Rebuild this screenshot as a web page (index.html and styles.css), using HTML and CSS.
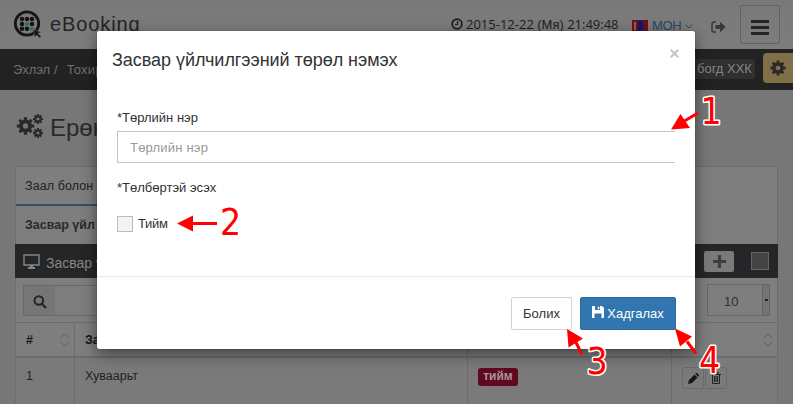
FILE: index.html
```html
<!DOCTYPE html>
<html lang="mn">
<head>
<meta charset="utf-8">
<title>eBooking</title>
<link rel="stylesheet" href="styles.css">
</head>
<body>
<header class="topbar">
  <svg class="logo" width="28" height="28" viewBox="0 0 28 28">
    <circle cx="14" cy="13.500" r="11.700" fill="none" stroke="#151515" stroke-width="2.800"/>
    <g fill="#151515"><circle cx="9" cy="9" r="2.300"/><circle cx="14" cy="9" r="2.300"/><circle cx="19" cy="9" r="2.300"/><circle cx="9" cy="14" r="2.300"/><circle cx="19" cy="14" r="2.300"/><circle cx="9" cy="18.700" r="2.300"/><circle cx="14" cy="18.700" r="2.300"/></g>
    <circle cx="14" cy="14" r="2" fill="#28706f"/><circle cx="18.700" cy="18.700" r="2" fill="#28706f"/>
    <path d="M20 19.500l8 2.500-3 1.500 3 3-1.500 1.500-3-3-1.500 2.500z" fill="#151515" stroke="#7a7a7a" stroke-width=".5"/>
  </svg>
  <span class="brand">eBooking</span>
  <svg class="clock" width="12" height="12" viewBox="0 0 12 12" fill="none" stroke="#1c1c1c"><circle cx="6" cy="6" r="4.900" stroke-width="1.700"/><path d="M6.500 3v3.500H4" stroke-width="1.200"/></svg>
  <span class="date">2015-12-22 <span class="day">(Мя)</span> 21:49:48</span>
  <svg class="flag" width="16" height="11" viewBox="0 0 16 11"><path fill="#701018" d="M0 0h16v11H0z"/><path fill="#161670" d="M6 1h5v10H6z"/><path d="M2 2h2v8H2z" fill="#8d6838"/></svg>
  <span class="lang">МОН</span>
  <svg class="chev" width="8" height="5" viewBox="0 0 8 5"><path d="M.5.5L4 4 7.500.5" fill="none" stroke="#234663"/></svg>
  <svg class="exit" width="15" height="12" viewBox="0 0 15 12"><path d="M5 1H3Q1 1 1 3v6q0 2 2 2h2" fill="none" stroke="#393939" stroke-width="1.500"/><path d="M4.500 4h4.500V.8L14.700 6 9 11.200V8H4.500z" fill="#393939"/></svg>
  <div class="burger"><i></i><i></i><i></i></div>
</header>
<nav class="crumbs">
  <span class="c1">Эхлэл</span><span class="sl">/</span><span class="c2">Тохир</span>
  <span class="org">богд ХХК</span>
  <span class="gearbox"><svg width="16" height="16" viewBox="-8 -8 16 16"><use href="#gear"/></svg></span>
</nav>
<svg class="defs" width="0" height="0"><defs><g id="gear"><circle r="4" fill="none" stroke="#292929" stroke-width="3.300"/><path d="M0-7.600V-4M0 4v3.600M-7.600 0H-4M4 0h3.600M-5.300-5.300l2.300 2.300M3 3l2.300 2.300M-5.300 5.300L-3 3M3-3l2.300-2.300" stroke="#292929" stroke-width="2.800"/></g></defs></svg>
<main class="page">
  <div class="heading">
    <svg width="28" height="24" viewBox="0 0 28 24"><use href="#gear" transform="translate(9.500 12) scale(1.150)"/><use href="#gear" transform="translate(22 5) scale(.66)"/><use href="#gear" transform="translate(22 19) scale(.66)"/></svg>
    <h1>Ерөн</h1>
  </div>
  <section class="panel">
    <div class="tab">Заал болон с</div>
    <div class="tab second">Засвар үйл</div>
    <div class="bar">
      <svg width="17" height="15" viewBox="0 0 17 15"><path d="M1 1h15v10H1z" fill="none" stroke="#858585" stroke-width="1.400"/><path d="M7 11h3v2h2v2H5v-2h2z" fill="#858585"/></svg>
      <span>Засвар ү</span>
      <b class="plus"><svg width="13" height="13" viewBox="0 0 13 13"><path d="M6.500 0v13M0 6.500h13" stroke="#393f44" stroke-width="3.200"/></svg></b>
      <b class="square"></b>
    </div>
    <div class="search">
      <div class="lens"><svg width="14" height="14" viewBox="0 0 14 14" fill="none" stroke="#242424"><circle cx="5.800" cy="5.500" r="4.300" stroke-width="2"/><path d="M9 9l4 4" stroke-width="2.200"/></svg></div>
      <div class="field"></div>
      <div class="count"><span>10</span><i></i></div>
    </div>
    <div class="row head">
      <div><span>#</span><svg class="sort" width="10" height="14" viewBox="0 0 10 14"><path d="M.5 5L5 .7 9.500 5M.5 8.500L5 13l4.500-4.500" fill="none" stroke="#5c5c5c"/></svg></div>
      <div>За</div><div></div>
      <div><svg class="sort" width="10" height="14" viewBox="0 0 10 14"><path d="M.5 5L5 .7 9.500 5M.5 8.500L5 13l4.500-4.500" fill="none" stroke="#5c5c5c"/></svg></div>
    </div>
    <div class="row data">
      <div>1</div><div>Хуваарьт</div><div><span class="tag">тийм</span></div>
      <div class="acts">
        <b><svg width="11" height="11" viewBox="0 0 11 11"><path d="M0 11l1-4 5.500-5.500 3 3L4 10zM7.200.8L8 0h1l2 2v1l-.8.800z" fill="#171717"/></svg></b>
        <b><svg width="10" height="12" viewBox="0 0 10 12" fill="none" stroke="#222"><path d="M0 2.500h10M3 2V.500h4V2M1.500 3v8.500h7V3M3.500 4v6M5 4v6M6.500 4v6"/></svg></b>
      </div>
    </div>
  </section>
</main>
<div class="modal">
  <div class="mhead"><h2>Засвар үйлчилгээний төрөл нэмэх</h2>
    <svg width="9" height="9" viewBox="0 0 9 9"><path d="M.8.8l7.400 7.400M8.200.8L.8 8.200" stroke="#c4c4c4" stroke-width="2"/></svg></div>
  <div class="mbody">
    <label class="l1">*Төрлийн нэр</label>
    <div class="input">Төрлийн нэр</div>
    <label class="l2">*Төлбөртэй эсэх</label>
    <div class="check"><i></i><span>Тийм</span></div>
  </div>
  <div class="mfoot">
    <div class="btn"><span class="bt">Болих</span></div>
    <div class="btn primary"><svg width="12" height="12" viewBox="0 0 12 12"><path fill="#fff" fill-rule="evenodd" d="M0 0h10l2 2v10H9.500V7.500h-7V12H0zM3 0v4h5V0zM5.700.7h1.600v2.600H5.700z"/></svg><span class="st">Хадгалах</span></div>
  </div>
</div>
<svg class="notes" width="793" height="404" viewBox="0 0 793 404">
  <g stroke="#f00" stroke-width="3"><path d="M698 113l-17 10M217 223.500h-30M582 354.500l-6-12M696 353.500l-9-12"/></g>
  <g fill="#f00"><path d="M671 129.500l9.500-15.500 9.500 14zM177 223.500l16-8v16zM567 329l16 9.500-14.500 9zM675 328.500l17 8-12 10z"/></g>
  <g class="num"><text x="700.500" y="124">1</text><text x="220" y="235">2</text><text x="586.500" y="373.500">3</text><text x="699" y="373">4</text></g>
</svg>
</body>
</html>
```
FILE: styles.css
```css
* { box-sizing: border-box; }
body { margin: 0; width: 793px; height: 404px; overflow: hidden; position: relative; background: #777; font: 13px "Liberation Sans", sans-serif; color: #222; }
svg { display: block; flex: none; }
span, label, h1, h2 { white-space: nowrap; }
.defs { position: absolute; }
.topbar { height: 49px; display: flex; align-items: flex-start; background: linear-gradient(#797979, #7d7d7d); }
.logo { margin: 10px 0 0 13px; }
.brand { margin: 12px 0 0 9px; width: 400px; font-size: 20px; line-height: 24px; letter-spacing: .9px; color: #242424; }
.clock { margin-top: 18px; margin-left: 1px; }
.date { margin: 15px 0 0 3px; width: 152px; font: 13px/19px "Open Sans", sans-serif; color: #1d1d1d; }
.day { font-family: "Liberation Sans", sans-serif; }
.flag { margin: 20px 0 0 14px; }
.lang { margin: 17px 0 0 4px; width: 30px; font-size: 13px; letter-spacing: -.3px; line-height: 17px; color: #234663; }
.chev { margin: 24px 0 0 3px; }
.exit { margin: 21px 0 0 18px; }
.burger { width: 40px; height: 39px; margin: 5px 0 0 14px; border: 1px solid #636363; border-radius: 2px; padding: 14px 10px 0; display: grid; grid-auto-rows: 3px; row-gap: 3px; }
.burger i { background: #252525; }
.crumbs { height: 41px; display: flex; align-items: center; background: #222; color: #707070; font-size: 13px; }
.c1 { margin-left: 13px; width: 35px; letter-spacing: -.1px; }
.sl { margin: 0 9px 0 6px; }
.c2 { letter-spacing: .2px; }
.org { height: 20px; width: 65px; padding-left: 7px; background: #303030; border-radius: 2px; line-height: 20px; margin-top: -1px; margin-left: auto; color: #858585; }
.gearbox { margin-left: 8px; width: 30px; height: 30px; border-radius: 4px 0 0 4px; background: #806f47; display: grid; place-items: center; margin-top: -3px; }
.page { padding: 0 15px; }
.heading { height: 76px; display: flex; padding: 24px 0 0 1px; }
.heading h1 { margin: 0 0 0 6px; font-size: 24px; line-height: 27px; font-weight: 400; color: #2a2a2a; }
.panel { width: 763px; border: 1px solid #6d6d6d; border-bottom: 0; background: #7e7e7e; }
.tab { width: 300px; height: 39px; padding: 10px 9px; line-height: 18px; border-bottom: 2px solid #305263; font-size: 12.500px; letter-spacing: .1px; }
.second { height: 38px; border: 0; font-weight: 700; color: #2a2a2a; letter-spacing: 0; }
.bar { height: 34px; display: flex; align-items: center; padding: 0 9px 0 8px; margin: 0 -1px; background: #242628; color: #858585; font-size: 14px; }
.bar span { margin: 3px auto 0 6px; }
.plus { width: 30px; height: 21px; border-radius: 2px; background: #7a7a7a; display: grid; place-items: center; }
.square { width: 18px; height: 18px; margin-left: 17px; background: #434446; border: 1px solid #666; }
.search { height: 44px; display: flex; align-items: center; padding: 0 7px; }
.lens { width: 32px; height: 31px; background: #767676; border: 1px solid #696969; border-right: 0; padding: 9px 0 0 9px; }
.field { width: 450px; height: 31px; border: 1px solid #676767; border-left: 0; }
.count { width: 63px; height: 32px; margin-left: auto; border: 1px solid #666; display: flex; align-items: center; font-size: 13px; color: #303030; }
.count span { width: 54px; padding: 2px 0 0 16px; }
.count i { width: 7px; height: 30px; border-left: 1px solid #666; background: linear-gradient(#222, #222) 2px 14px / 3px 2px no-repeat #747474; }
.row { display: grid; grid-template-columns: 59px 393px 204px 1fr; }
.row > div { border-right: 1px solid #6c6c6c; padding-left: 10px; display: flex; align-items: center; }
.row > div:last-child { border: 0; }
.head { height: 36px; border-top: 1px solid #6c6c6c; border-bottom: 2px solid #6c6c6c; font-weight: 700; font-size: 12.500px; color: #171717; }
.sort { margin: 0 4px 0 auto; }
.data { height: 47px; background: #7a7a7a; font-size: 12.500px; }
.data > div { padding-bottom: 11px; }
.tag { height: 18px; width: 40px; border-radius: 3px; background: #610820; color: #a7949a; font-weight: 700; font-size: 12px; line-height: 16px; text-align: center; margin-top: 2px; }
.row .acts { padding-bottom: 7px; gap: 1px; }
.acts b { width: 22px; height: 22px; border: 1px solid #6a6a6a; border-radius: 2px; display: grid; place-items: center; }
.modal { position: absolute; left: 97px; top: 31px; width: 598px; height: 318px; background: #fff; border-radius: 2px; box-shadow: 0 5px 15px rgba(0,0,0,.5), 0 0 1px #333; }
.mhead { height: 70px; display: flex; justify-content: space-between; padding: 18px 16px 0 15px; }
.mhead h2 { margin: 0; font-size: 18px; line-height: 22px; font-weight: 400; letter-spacing: -.04px; color: #333; }
.mbody { height: 176px; padding: 8px 20px 0; display: flex; flex-direction: column; color: #333; border-bottom: 1px solid #e9e9e9; }
.l1, .l2 { height: 22px; line-height: 17px; font-size: 13px; }
.input { height: 32px; border: 1px solid #c5c5c5; border-right: 0; padding-left: 12px; line-height: 31px; color: #999; font-size: 13px; letter-spacing: .2px; }
.l2 { margin-top: 16px; height: 37px; }
.check { display: flex; }
.check i { width: 16px; height: 16px; background: #f3f3f3; border: 1px solid #bbb; }
.check span { margin-left: 5px; line-height: 15px; letter-spacing: -.3px; }
.mfoot { display: flex; justify-content: flex-end; padding: 20px 19px 0; gap: 8px; }
.btn { width: 61px; height: 33px; border: 1px solid #d2d2d2; border-radius: 2px; font-size: 13px; display: flex; align-items: center; justify-content: center; color: #333; }
.primary { width: 96px; color: #fff; background: #3276b1; border-color: #2c699d; gap: 3px; }
.primary svg { margin-top: -3px; }
.notes { position: absolute; left: 0; top: 0; }
.num { font: 37px "DejaVu Sans Condensed", "DejaVu Sans", sans-serif; font-stretch: condensed; fill: #f00; stroke: #fff; stroke-width: 3px; paint-order: stroke; stroke-linejoin: round; }
```
